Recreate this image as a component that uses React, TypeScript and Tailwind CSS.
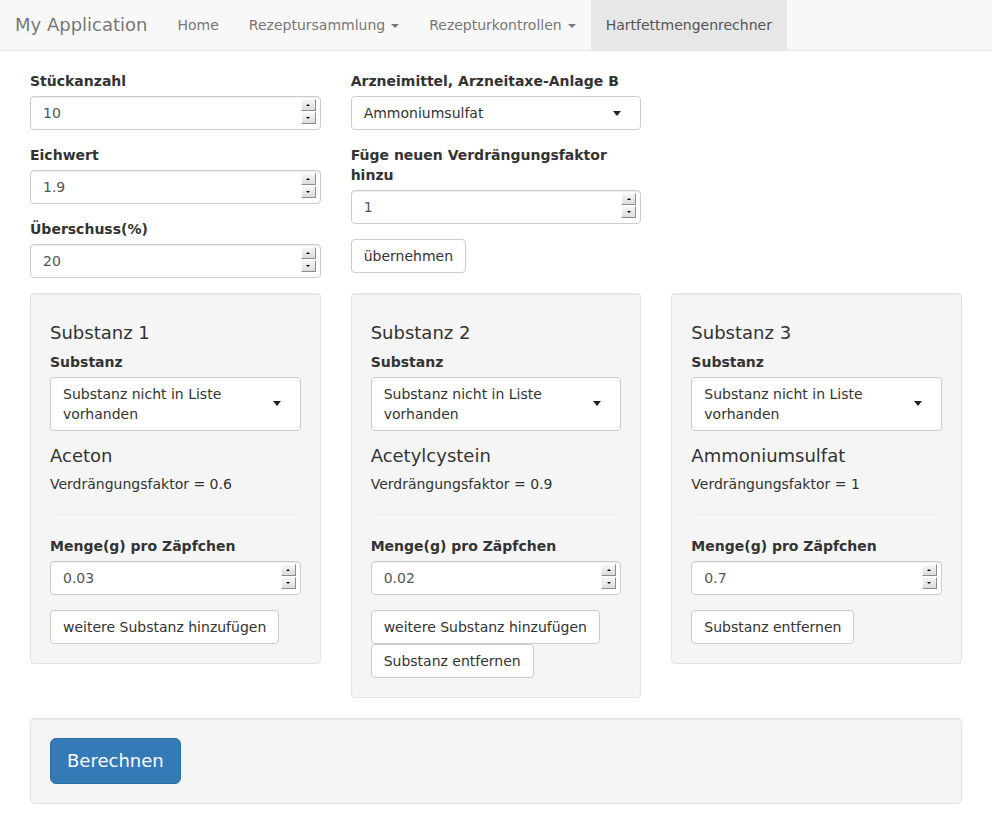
import React from "react";

const Caret = ({ color = "border-t-[#777]" }: { color?: string }) => (
  <span
    className={`inline-block w-0 h-0 ml-[6px] align-middle border-t-4 border-x-4 border-x-transparent ${color}`}
  ></span>
);

const SpinButton = ({ up }: { up?: boolean }) => (
  <div className="w-[15px] h-[12px] flex items-center justify-center bg-linear-to-b from-[#f6f6f6] to-[#dcdcdc] border border-t-[#fdfdfd] border-l-[#fdfdfd] border-r-[#8c8c8c] border-b-[#8c8c8c]">
    {up ? (
      <span className="w-0 h-0 border-x-[2px] border-x-transparent border-b-[2px] border-b-black"></span>
    ) : (
      <span className="w-0 h-0 border-x-[2px] border-x-transparent border-t-[2px] border-t-black"></span>
    )}
  </div>
);

const NumberInput = ({ value }: { value: string }) => (
  <div className="relative">
    <input
      type="text"
      readOnly
      value={value}
      className="block w-full h-[34px] px-3 py-[6px] text-sm leading-5 text-[#555] bg-white border border-[#ccc] rounded shadow-[inset_0_1px_1px_rgba(0,0,0,0.075)] outline-none"
    />
    <div className="absolute right-[5px] top-[3px] flex flex-col gap-px">
      <SpinButton up />
      <SpinButton />
    </div>
  </div>
);

const Select = ({ text }: { text: string }) => (
  <div className="flex items-center justify-between min-h-[34px] pl-3 pr-[19px] py-[6px] bg-white border border-[#ccc] rounded text-sm leading-5 text-[#333]">
    <span className="pr-[18px]">{text}</span>
    <span className="shrink-0 w-0 h-0 border-t-[5px] border-t-[#222] border-x-[4px] border-x-transparent"></span>
  </div>
);

const Label = ({ children }: { children: React.ReactNode }) => (
  <label className="block mb-[5px] text-sm leading-5 font-bold text-[#333]">
    {children}
  </label>
);

const Button = ({ children }: { children: React.ReactNode }) => (
  <button className="inline-block h-[34px] px-3 py-[6px] text-sm leading-5 text-[#333] bg-white border border-[#ccc] rounded">
    {children}
  </button>
);

type Substance = {
  title: string;
  name: string;
  factor: string;
  amount: string;
  add: boolean;
  remove: boolean;
};

const substances: Substance[] = [
  { title: "Substanz 1", name: "Aceton", factor: "0.6", amount: "0.03", add: true, remove: false },
  { title: "Substanz 2", name: "Acetylcystein", factor: "0.9", amount: "0.02", add: true, remove: true },
  { title: "Substanz 3", name: "Ammoniumsulfat", factor: "1", amount: "0.7", add: false, remove: true },
];

const Well = ({ children }: { children: React.ReactNode }) => (
  <div className="p-[19px] bg-[#f5f5f5] border border-[#e3e3e3] rounded shadow-[inset_0_1px_1px_rgba(0,0,0,0.05)]">
    {children}
  </div>
);

export default function App() {
  return (
    <div className="min-h-screen bg-white font-['DejaVu_Sans',sans-serif] text-sm text-[#333]">
      <nav className="flex h-[51px] bg-[#f8f8f8] border-b border-[#e7e7e7]">
        <a className="block px-[15px] py-[15px] text-[18px] leading-5 text-[#777]">My Application</a>
        <a className="block px-[15px] py-[15px] leading-5 text-[#777]">Home</a>
        <a className="block px-[15px] py-[15px] leading-5 text-[#777]">
          Rezeptursammlung
          <Caret />
        </a>
        <a className="block px-[15px] py-[15px] leading-5 text-[#777]">
          Rezepturkontrollen
          <Caret />
        </a>
        <a className="block px-[15px] py-[15px] leading-5 text-[#555] bg-[#e7e7e7]">Hartfettmengenrechner</a>
      </nav>

      <div className="px-[30px] pt-[20px]">
        <div className="grid grid-cols-3 gap-x-[30px]">
          <div>
            <div className="mb-[15px]">
              <Label>Stückanzahl</Label>
              <NumberInput value="10" />
            </div>
            <div className="mb-[15px]">
              <Label>Eichwert</Label>
              <NumberInput value="1.9" />
            </div>
            <div className="mb-[15px]">
              <Label>Überschuss(%)</Label>
              <NumberInput value="20" />
            </div>
          </div>
          <div>
            <div className="mb-[15px]">
              <Label>Arzneimittel, Arzneitaxe-Anlage B</Label>
              <Select text="Ammoniumsulfat" />
            </div>
            <div className="mb-[15px]">
              <Label>Füge neuen Verdrängungsfaktor hinzu</Label>
              <NumberInput value="1" />
            </div>
            <Button>übernehmen</Button>
          </div>
          <div></div>
        </div>

        <div className="grid grid-cols-3 gap-x-[30px] items-start">
          {substances.map((s) => (
            <Well key={s.title}>
              <h4 className="mt-[10px] mb-[9px] text-[18px] leading-[1.1] font-normal">{s.title}</h4>
              <div className="mb-[15px]">
                <Label>Substanz</Label>
                <Select text="Substanz nicht in Liste vorhanden" />
              </div>
              <h4 className="mb-[8px] text-[18px] leading-[1.1] font-normal">{s.name}</h4>
              <p className="leading-5">Verdrängungsfaktor = {s.factor}</p>
              <hr className="mt-5 mb-[21px] border-0 border-t border-[#eee]" />
              <div className="mb-[15px]">
                <Label>Menge(g) pro Zäpfchen</Label>
                <NumberInput value={s.amount} />
              </div>
              <div className="flex flex-col items-start">
                {s.add && <Button>weitere Substanz hinzufügen</Button>}
                {s.remove && <Button>Substanz entfernen</Button>}
              </div>
            </Well>
          ))}
        </div>

        <div className="mt-5">
          <Well>
            <button className="inline-block h-[46px] px-4 py-[10px] text-[18px] leading-[24px] text-white bg-[#337ab7] border border-[#2e6da4] rounded-md">
              Berechnen
            </button>
          </Well>
        </div>
      </div>
    </div>
  );
}
